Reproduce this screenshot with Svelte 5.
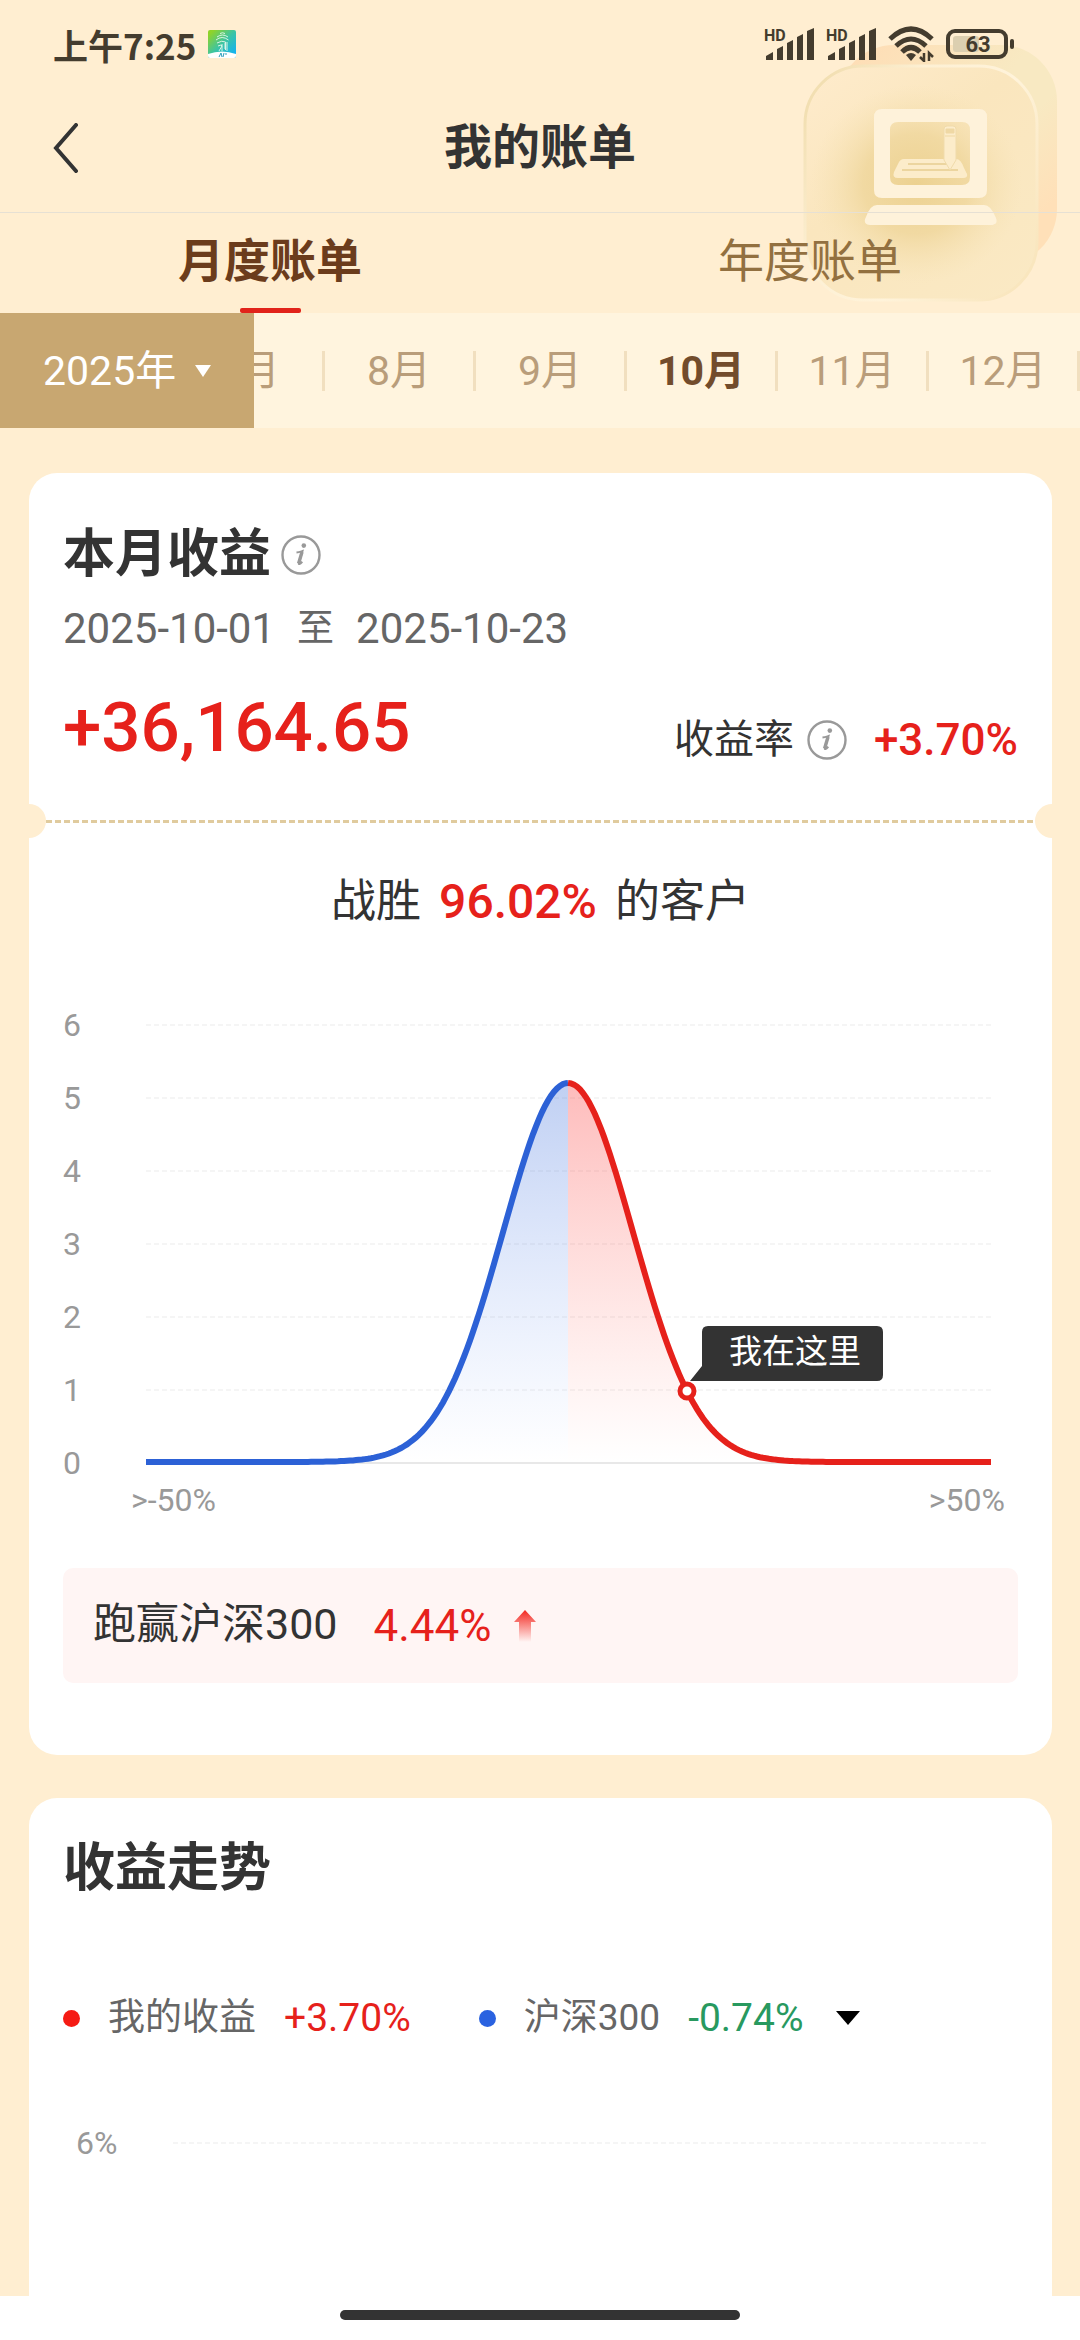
<script>
	let years = ['2025年', '2024年', '2023年'];
	let year = '2025年';
	let months = [7, 8, 9, 10, 11, 12];
	let month = 10;
	let tab = 'month';

	const yTicks = [6, 5, 4, 3, 2, 1, 0];
	const chart = { left: 83, right: 928, base: 463, step: 73, peakX: 505, peakY: 83, sigma: 65 };

	const baseline = chart.base - 1;

	function curveY(x) {
		const d = (x - chart.peakX) / chart.sigma;
		return baseline - (baseline - chart.peakY) * Math.exp(-d * d / 2);
	}

	function curve(from, to) {
		let points = [];
		for (let x = from; x < to; x += 3) {
			points.push(`${x},${curveY(x).toFixed(1)}`);
		}
		points.push(`${to},${curveY(to).toFixed(1)}`);
		return 'M' + points.join('L');
	}

	const lossLine = curve(chart.left, chart.peakX);
	const gainLine = curve(chart.peakX, chart.right);
	const lossArea = `${lossLine}V${baseline}H${chart.left}Z`;
	const gainArea = `${gainLine}V${baseline}H${chart.peakX}Z`;
	const here = { x: 624, y: 391 };
</script>

{#snippet info()}
	<button class="info" aria-label="说明">
		<svg viewBox="0 0 40 40" width="40" height="40">
			<circle cx="20" cy="20" r="18.5" fill="none" stroke="#999" stroke-width="2.4" />
			<circle cx="22.8" cy="10.6" r="2.3" fill="#999" />
			<path d="M15.5 17.6c2.6-.3 4.2-1 6-1.6l-3.6 12.2c-.4 1.4.8 1.3 3.4-1.4" fill="none" stroke="#999" stroke-width="2" />
			<path d="M21 17l-3.4 11.4" stroke="#999" stroke-width="3.4" />
		</svg>
	</button>
{/snippet}

{#snippet signal()}
	<svg class="signal" viewBox="0 0 50 34" width="50" height="34">
		<text x="0" y="14" class="hd">HD</text>
		<path d="M2 33v-4l7-4v8zM13 33V22l6-3v14zM23 33V16l6-3v20zM33 33V10l6-3v26zM43 33V4l7-3v32z" fill="#443c2e" />
	</svg>
{/snippet}

<div class="page">
	<header>
		<svg class="watermark" viewBox="0 0 260 260" width="260" height="260" aria-hidden="true">
			<defs>
				<linearGradient id="back-tile" x1="0" y1="0" x2="1" y2="1">
					<stop offset="0" stop-color="#ffdcb4" />
					<stop offset="0.45" stop-color="#f8e9c2" />
					<stop offset="0.6" stop-color="#f8e9c2" />
					<stop offset="0.85" stop-color="#ffe0b8" />
				</linearGradient>
				<linearGradient id="front-tile" x1="0.1" y1="0" x2="0.9" y2="1">
					<stop offset="0" stop-color="#feebcb" />
					<stop offset="0.4" stop-color="#fae6be" />
					<stop offset="1" stop-color="#fae9c4" />
				</linearGradient>
				<radialGradient id="glow">
					<stop offset="0" stop-color="#ecd190" />
					<stop offset="0.5" stop-color="#efd69b" stop-opacity="0.8" />
					<stop offset="1" stop-color="#f6e2b4" stop-opacity="0" />
				</radialGradient>
				<linearGradient id="tile-edge" x1="0" y1="0.2" x2="1" y2="0.8">
					<stop offset="0" stop-color="#f2dfb2" />
					<stop offset="0.3" stop-color="#fdf0d4" />
					<stop offset="0.6" stop-color="#fff3da" />
					<stop offset="1" stop-color="#f9e6be" />
				</linearGradient>
			</defs>
			<rect x="38" y="1" width="219" height="220" rx="56" fill="url(#back-tile)" />
			<rect x="5" y="22" width="232" height="234" rx="58" fill="url(#front-tile)" stroke="url(#tile-edge)" stroke-width="3" />
			<ellipse cx="116" cy="140" rx="106" ry="100" fill="url(#glow)" />
			<path fill-rule="evenodd" d="M82 65h97q8 0 8 8v73q0 8-8 8H82q-8 0-8-8V73q0-8 8-8zM98 78q-8 0-8 8v47q0 8 8 8h64q8 0 8-8V86q0-8-8-8z" fill="#fef2da" />
			<path d="M77 161h107q7 0 12 13c2 5-1 7-5 7H70c-4 0-7-3-4-8q4-12 11-12z" fill="#fef2da" />
			<path d="M104 115h52q5 0 8 9l3 6q1 4-4 4H98q-6 0-4-6l4-8q2-5 6-5z" fill="#fcecca" />
			<path d="M108 120h40M102 126h56" stroke="#ecd59f" stroke-width="2" />
			<path d="M144 85q0-3 3-3h6q3 0 3 3v31l-6 10-6-10z" fill="#fcecca" stroke="#f0dbab" />
			<path d="M146 85h8v4h-8zM145 92h10" fill="#efd8a4" stroke="#efd8a4" />
		</svg>

		<div class="status">
			<span class="time">上午7:25</span>
			<svg viewBox="0 0 28 28" width="28" height="28">
				<defs>
					<linearGradient id="app-tile" x1="0" y1="0" x2="1" y2="1">
						<stop offset="0.1" stop-color="#8fd32a" />
						<stop offset="0.5" stop-color="#3cc4a4" />
						<stop offset="0.9" stop-color="#12b2f2" />
					</linearGradient>
				</defs>
				<rect width="28" height="28" rx="2" fill="url(#app-tile)" />
				<path d="M12 3.5q2.5-1.5 5 0M9 7q5.500-4 11 0M8 10q6-5 12.500 0M9 13q5-3 8.500-1v8M10 16q4-2 4 0l-3 5M14 14v7M17 19v-6M19 12v9" fill="none" stroke="#d9f5e6" />
				<path d="M0 24q14-5 28 0v2q0 2-2 2H2q-2 0-2-2z" fill="#fff" />
				<path d="M11 27l2-4 1 4M16 23l-1 4M18 23v2" stroke="#2c9dbb" fill="none" />
			</svg>
			<div class="status-icons">
				{@render signal()}
				{@render signal()}
				<svg viewBox="0 0 46 36" width="46" height="36">
					<g fill="none" stroke="#443c2e" stroke-width="5">
						<path d="M2 13q21-20 42 0" />
						<path d="M8 20q15-14 30 0" />
						<path d="M14 26q9-9 18 0" />
					</g>
					<path d="M18 29q5-4 10 0l-5 6z" fill="#443c2e" />
					<path d="M36 27v8l-4-4M41 35v-8l4 4" fill="none" stroke="#443c2e" stroke-width="2.5" />
				</svg>
				<svg viewBox="0 0 68 30" width="68" height="30">
					<rect x="2" y="2" width="58" height="26" rx="7" fill="none" stroke="#443c2e" stroke-width="4" />
					<rect x="7" y="7" width="26" height="16" rx="3" fill="#dccfb0" />
					<rect x="64" y="10" width="4" height="10" rx="2" fill="#443c2e" />
					<text x="32" y="23" class="charge">63</text>
				</svg>
			</div>
		</div>

		<div class="nav">
			<button class="back" aria-label="返回">
				<svg viewBox="0 0 26 50" width="26" height="50">
					<path d="M23 2L3 25l20 23" fill="none" stroke="#333" stroke-width="4" stroke-linecap="round" />
				</svg>
			</button>
			<h1>我的账单</h1>
		</div>

		<div class="tabs">
			<button class:active={tab === 'month'} on:click={() => tab = 'month'}>月度账单</button>
			<button class:active={tab === 'year'} on:click={() => tab = 'year'}>年度账单</button>
		</div>
	</header>

	<div class="months">
		<label class="year">
			<select bind:value={year} aria-label="年份">
				{#each years as y}
					<option>{y}</option>
				{/each}
			</select>
			<svg viewBox="0 0 16 12" width="16" height="12"><path d="M0 0h16L8 12z" fill="#fff" /></svg>
		</label>
		<div class="month-list">
			{#each months as m}
				<button class:active={m === month} on:click={() => month = m}>{m}月</button>
			{/each}
		</div>
	</div>

	<main>
		<section class="card">
			<h2>本月收益 {@render info()}</h2>
			<div class="dates">
				<span>2025-10-01</span>
				<span class="to">至</span>
				<span>2025-10-23</span>
			</div>
			<div class="income">
				<strong>+36,164.65</strong>
				<div class="rate">
					<span>收益率</span>
					{@render info()}
					<b>+3.70%</b>
				</div>
			</div>

			<div class="tear"><i></i><hr><i></i></div>

			<p class="beat">战胜 <b>96.02%</b> 的客户</p>

			<svg class="chart" viewBox="0 0 955 530">
				<defs>
					<linearGradient id="loss" x1="0" y1="0" x2="0" y2="1">
						<stop offset="0" stop-color="#2c61d6" stop-opacity="0.3" />
						<stop offset="1" stop-color="#5c8cf5" stop-opacity="0" />
					</linearGradient>
					<linearGradient id="gain" x1="0" y1="0" x2="0" y2="1">
						<stop offset="0" stop-color="#fb2c2c" stop-opacity="0.32" />
						<stop offset="1" stop-color="#ff5a4a" stop-opacity="0" />
					</linearGradient>
				</defs>
				{#each yTicks as tick}
					{@const y = chart.base - tick * chart.step}
					<text x="0" y={y + 11} class="tick">{tick}</text>
					{#if tick}
						<line x1={chart.left} x2={chart.right} y1={y} y2={y} class="grid" />
					{:else}
						<line x1={chart.left} x2={chart.right} y1={y} y2={y} class="axis" />
					{/if}
				{/each}
				<path d={lossArea} fill="url(#loss)" />
				<path d={gainArea} fill="url(#gain)" />
				<path d={lossLine} class="curve loss" />
				<path d={gainLine} class="curve gain" />
				<text x="68" y="511" class="tick">&gt;-50%</text>
				<text x="942" y="511" text-anchor="end" class="tick">&gt;50%</text>
				<path d="M645 326h169q6 0 6 6v43q0 6-6 6H627l12-15v-34q0-6 6-6z" fill="#333" />
				<text x="732" y="363" text-anchor="middle" class="tip">我在这里</text>
				<circle cx={here.x} cy={here.y} r="7" fill="#fff" stroke="#e6211b" stroke-width="5" />
			</svg>

			<div class="versus">
				<span>跑赢沪深300</span>
				<b>4.44%</b>
				<svg viewBox="0 0 22 32" width="22" height="32">
					<defs>
						<linearGradient id="up" x1="0" y1="0" x2="0" y2="1">
							<stop offset="0" stop-color="#f3271f" />
							<stop offset="1" stop-color="#f3271f" stop-opacity="0" />
						</linearGradient>
					</defs>
					<path d="M11 0l11 12h-5v20H5V12H0z" fill="url(#up)" />
				</svg>
			</div>
		</section>

		<section class="card trend">
			<h2>收益走势</h2>
			<div class="legend">
				<span class="dot mine"></span>
				<span>我的收益</span>
				<b class="up">+3.70%</b>
				<button class="benchmark">
					<span class="dot index"></span>
					<span>沪深300</span>
					<b class="down">-0.74%</b>
					<svg viewBox="0 0 24 14" width="24" height="14"><path d="M0 0h24L12 14z" /></svg>
				</button>
			</div>
			<svg class="chart" viewBox="0 0 955 196">
				<text x="13" y="54" class="tick">6%</text>
				<line x1="110" x2="925" y1="43" y2="43" class="grid" />
			</svg>
		</section>
	</main>

	<footer><span></span></footer>
</div>

<style>
	:global(body) {
		background: #ffeed1;
	}

	.page {
		font-family: Roboto, "Noto Sans CJK SC", sans-serif;
		color: #333;
		overflow: hidden;
	}

	button, select {
		font: inherit;
		color: inherit;
		background: none;
		border: 0;
		padding: 0;
		margin: 0;
		cursor: pointer;
	}

	svg {
		display: block;
		flex: none;
	}

	h1, h2, p {
		margin: 0;
	}

	header {
		position: relative;
		z-index: 0;
	}

	.status {
		display: flex;
		align-items: center;
		gap: 12px;
		height: 80px;
		padding: 4px 66px 0 53px;
	}

	.time {
		font: bold 35px "Noto Sans CJK SC", sans-serif;
		color: #443c2e;
	}

	.status-icons {
		display: flex;
		align-items: center;
		gap: 12px;
		margin-left: auto;
	}

	.signal {
		overflow: visible;
	}

	.hd {
		font: bold 16px Roboto, sans-serif;
		fill: #443c2e;
	}

	.charge {
		font: bold 22px Roboto, sans-serif;
		fill: #443c2e;
		text-anchor: middle;
	}

	.nav {
		display: grid;
		grid-template-columns: 1fr auto 1fr;
		align-items: center;
		height: 128px;
		padding: 0 53px;
		border-bottom: 1px solid #e6e0d4;
	}

	.back {
		justify-self: start;
	}

	h1 {
		font-size: 48px;
		line-height: 72px;
		font-weight: 700;
	}

	.tabs {
		display: grid;
		grid-template-columns: 1fr 1fr;
		height: 100px;
	}

	.tabs button {
		display: flex;
		flex-direction: column;
		align-items: center;
		justify-content: flex-end;
		font-size: 46px;
		line-height: 68px;
		color: #927040;
	}

	.tabs button::after {
		content: '';
		width: 61px;
		height: 5px;
		margin-top: 13px;
		border-radius: 2px;
	}

	.tabs .active {
		font-weight: 700;
		color: #6b3c1c;
	}

	.tabs .active::after {
		background: #e1231a;
	}

	.watermark {
		position: absolute;
		top: 44px;
		right: 20px;
		z-index: -1;
	}

	.months {
		display: flex;
		height: 115px;
		font-size: 41px;
		background: #fff4de;
	}

	.year {
		display: flex;
		align-items: center;
		justify-content: center;
		gap: 18px;
		flex: none;
		width: 254px;
		color: #fff;
		background: #c8a771;
	}

	.year select {
		appearance: none;
	}

	.month-list {
		display: flex;
		flex: 1;
		align-items: center;
		justify-content: flex-end;
		min-width: 0;
		overflow: hidden;
	}

	.month-list button {
		flex: none;
		width: 151px;
		height: 40px;
		line-height: 40px;
		color: #b99d7a;
		border-right: 3px solid #f1dfbf;
	}

	.month-list .active {
		font-weight: 700;
		color: #724c2c;
	}

	main {
		display: flex;
		flex-direction: column;
		gap: 43px;
		padding: 45px 28px 0 29px;
	}

	.card {
		padding: 40px 34px 72px;
		border-radius: 28px;
		background: #fff;
	}

	h2 {
		display: flex;
		align-items: center;
		gap: 10px;
		font-size: 52px;
		line-height: 84px;
		font-weight: 700;
	}

	.dates {
		display: flex;
		align-items: center;
		gap: 22px;
		font-size: 42px;
		line-height: 64px;
		color: #666;
	}

	.to {
		font-size: 37px;
	}

	b, strong {
		font-weight: 500;
		color: #e6211b;
	}

	.income {
		display: flex;
		align-items: flex-end;
		justify-content: space-between;
		margin-top: 27px;
	}

	.income strong {
		font-size: 69px;
		line-height: 80px;
	}

	.rate {
		display: flex;
		align-items: center;
		gap: 13px;
		font-size: 40px;
		line-height: 56px;
	}

	.rate b {
		margin-left: 14px;
		font-size: 44px;
	}

	.tear {
		display: flex;
		align-items: center;
		margin: 36px -34px 0;
	}

	.tear i {
		width: 17px;
		height: 34px;
		border-radius: 0 17px 17px 0;
		background: #ffeed1;
	}

	.tear i:last-child {
		border-radius: 17px 0 0 17px;
	}

	.tear hr {
		flex: 1;
		height: 3px;
		margin: 0;
		border: 0;
		background: repeating-linear-gradient(90deg, #e0cb9e 0 6px, transparent 6px 9px);
	}

	.beat {
		display: flex;
		align-items: center;
		justify-content: center;
		gap: 18px;
		margin-top: 32px;
		font-size: 45px;
		line-height: 64px;
	}

	.beat b {
		font-size: 48px;
	}

	.chart {
		width: 100%;
		margin-top: 66px;
	}

	.tick {
		font-size: 32px;
		fill: #999;
	}

	.grid {
		stroke: #ebebeb;
		stroke-width: 1;
		stroke-dasharray: 5 3;
	}

	.axis {
		stroke: #e8e8e8;
		stroke-width: 2;
	}

	.curve {
		fill: none;
		stroke-width: 6;
	}

	.curve.loss {
		stroke: #2c61d6;
	}

	.curve.gain {
		stroke: #e6211b;
	}

	.tip {
		font-size: 33px;
		fill: #fff;
	}

	.versus {
		display: flex;
		align-items: center;
		height: 115px;
		margin-top: 38px;
		padding: 0 30px;
		border-radius: 10px;
		font-size: 43px;
		line-height: 64px;
		background: #fff5f4;
	}

	.versus span {
		padding-bottom: 4px;
	}

	.versus b {
		margin: 0 22px 0 36px;
		font-size: 44px;
		font-weight: 400;
	}

	.trend {
		padding: 29px 34px 0;
		border-radius: 28px 28px 0 0;
	}

	.legend, .benchmark {
		display: flex;
		align-items: center;
	}

	.legend {
		margin-top: 77px;
		font-size: 37px;
		line-height: 60px;
		color: #666;
	}

	.legend b {
		margin-left: 28px;
		font-size: 39px;
		font-weight: 400;
	}

	.benchmark {
		margin-left: 68px;
	}

	.benchmark svg {
		margin-left: 32px;
	}

	.dot {
		width: 17px;
		height: 17px;
		margin-right: 28px;
		border-radius: 50%;
	}

	.mine {
		background: #f51b14;
	}

	.index {
		background: #2a62e0;
	}

	.legend .down {
		color: #28995f;
	}

	.trend .chart {
		margin-top: 52px;
	}

	footer {
		display: flex;
		justify-content: center;
		height: 30px;
		padding-top: 14px;
		background: #fff;
	}

	footer span {
		width: 37%;
		height: 10px;
		border-radius: 5px;
		background: #333;
	}
</style>
